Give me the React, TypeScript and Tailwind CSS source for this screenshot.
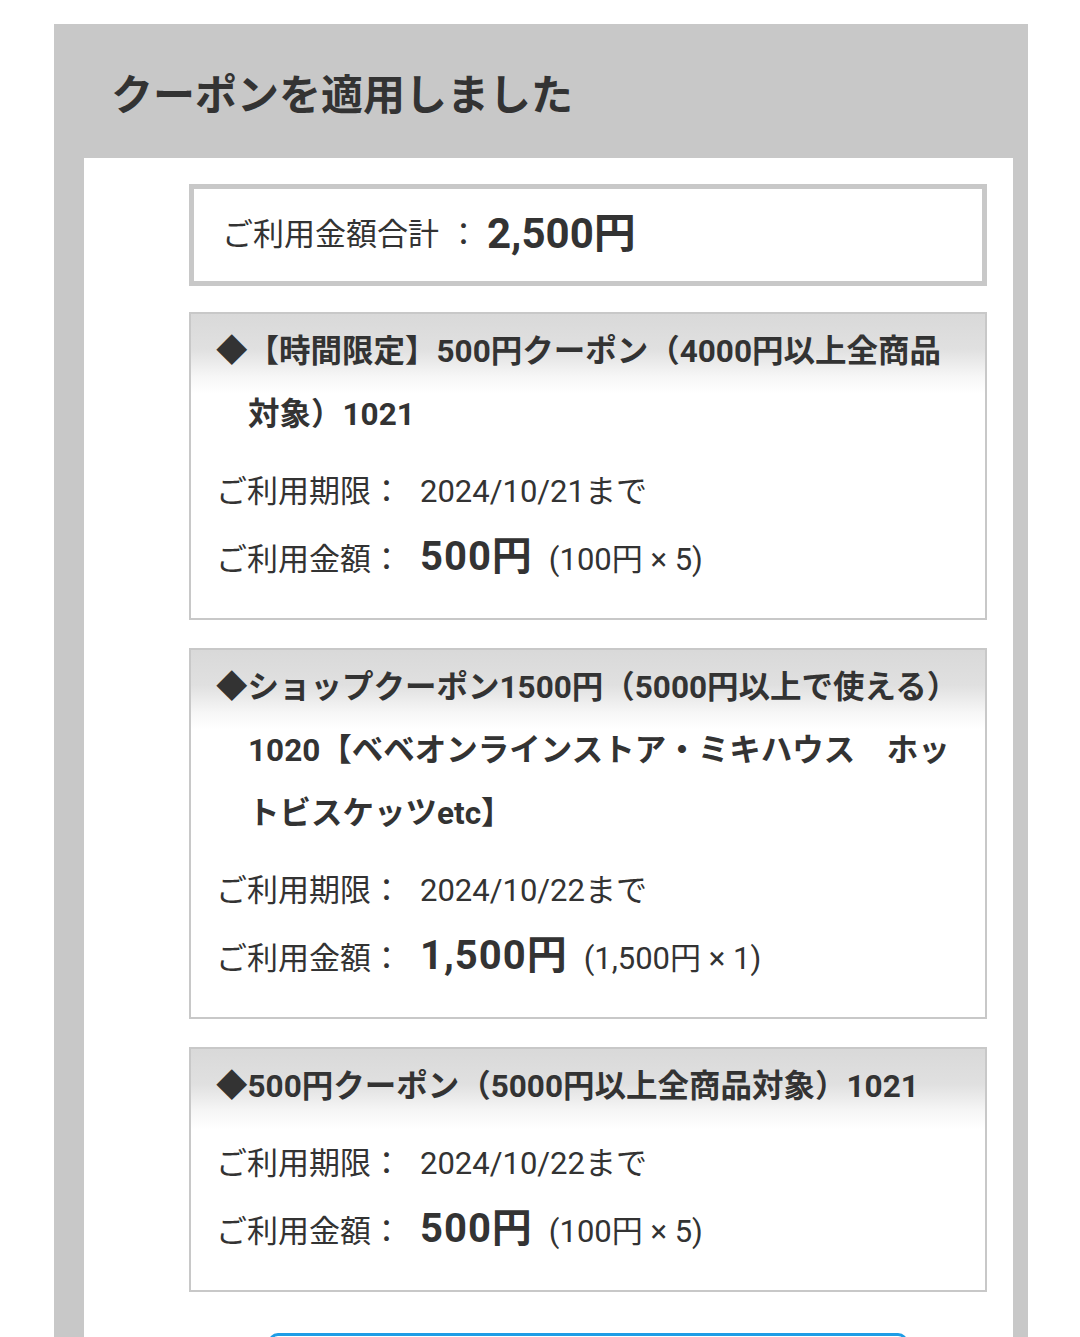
const font = { fontFamily: 'Roboto, "Noto Sans CJK JP", sans-serif' };

interface Coupon {
  title: string[];
  limit: string;
  amount: string;
  detail: string;
}

const coupons: Coupon[] = [
  {
    title: ["◆【時間限定】500円クーポン（4000円以上全商品", "対象）1021"],
    limit: "2024/10/21まで",
    amount: "500円",
    detail: "(100円 × 5)",
  },
  {
    title: [
      "◆ショップクーポン1500円（5000円以上で使える）",
      "1020【ベベオンラインストア・ミキハウス　ホッ",
      "トビスケッツetc】",
    ],
    limit: "2024/10/22まで",
    amount: "1,500円",
    detail: "(1,500円 × 1)",
  },
  {
    title: ["◆500円クーポン（5000円以上全商品対象）1021"],
    limit: "2024/10/22まで",
    amount: "500円",
    detail: "(100円 × 5)",
  },
];

const CouponCard = ({ title, limit, amount, detail }: Coupon) => (
  <div className="border-2 border-[#c8c8c8] bg-[linear-gradient(180deg,#d9d9d9_0px,#e0e0e0_35px,#f6f6f6_62px,#ffffff_80px)] pt-[6px] pb-[24px] pl-[25px] pr-4">
    {/* タイトル（2行目以降はぶら下げ） */}
    <div className="text-[31.5px] font-bold leading-[63px] text-[#333]">
      {title.map((line, i) => (
        <div key={i} className={`whitespace-nowrap ${i > 0 ? "pl-[32px]" : ""}`}>
          {line}
        </div>
      ))}
    </div>
    <div className="mt-[12px] text-[#333]">
      <div className="flex h-[68px] items-center">
        <span className="w-[204px] text-[31px]">ご利用期限：</span>
        <span className="text-[31px]">{limit}</span>
      </div>
      <div className="flex h-[68px] items-center">
        <span className="w-[204px] text-[31px]">ご利用金額：</span>
        <span className="text-[40px] font-bold tracking-[1px] -mt-[6px]">{amount}</span>
        <span className="ml-[16px] text-[31px]">{detail}</span>
      </div>
    </div>
  </div>
);

export default function App() {
  return (
    <div className="min-h-screen bg-white pt-6 pl-[54px] pr-[52px]" style={font}>
      <div className="bg-[#c8c8c8] pb-10">
        <h1 className="flex h-[134px] items-center pl-[57px] pt-[8px] text-[42px] font-bold text-[#333]">
          クーポンを適用しました
        </h1>
        <div className="ml-[30px] mr-[15px] bg-white pt-[26px] pl-[105px] pr-[26px] pb-16">
          <div className="flex h-[102px] items-center border-[5px] border-[#c8c8c8] pl-[28px] text-[#333]">
            <span className="text-[31px]">ご利用金額合計</span>
            <span className="ml-[9px] text-[31px]">：</span>
            <span className="ml-[8px] text-[42px] font-bold -mt-[4px]">2,500円</span>
          </div>
          <div className="mt-[26px] flex flex-col gap-[28px]">
            {coupons.map((c, i) => (
              <CouponCard key={i} {...c} />
            ))}
          </div>
          <button className="mx-auto mt-[41px] block h-[90px] w-[640px] rounded-[10px] border-[3px] border-[#1e9de6] bg-white" />
        </div>
      </div>
    </div>
  );
}
